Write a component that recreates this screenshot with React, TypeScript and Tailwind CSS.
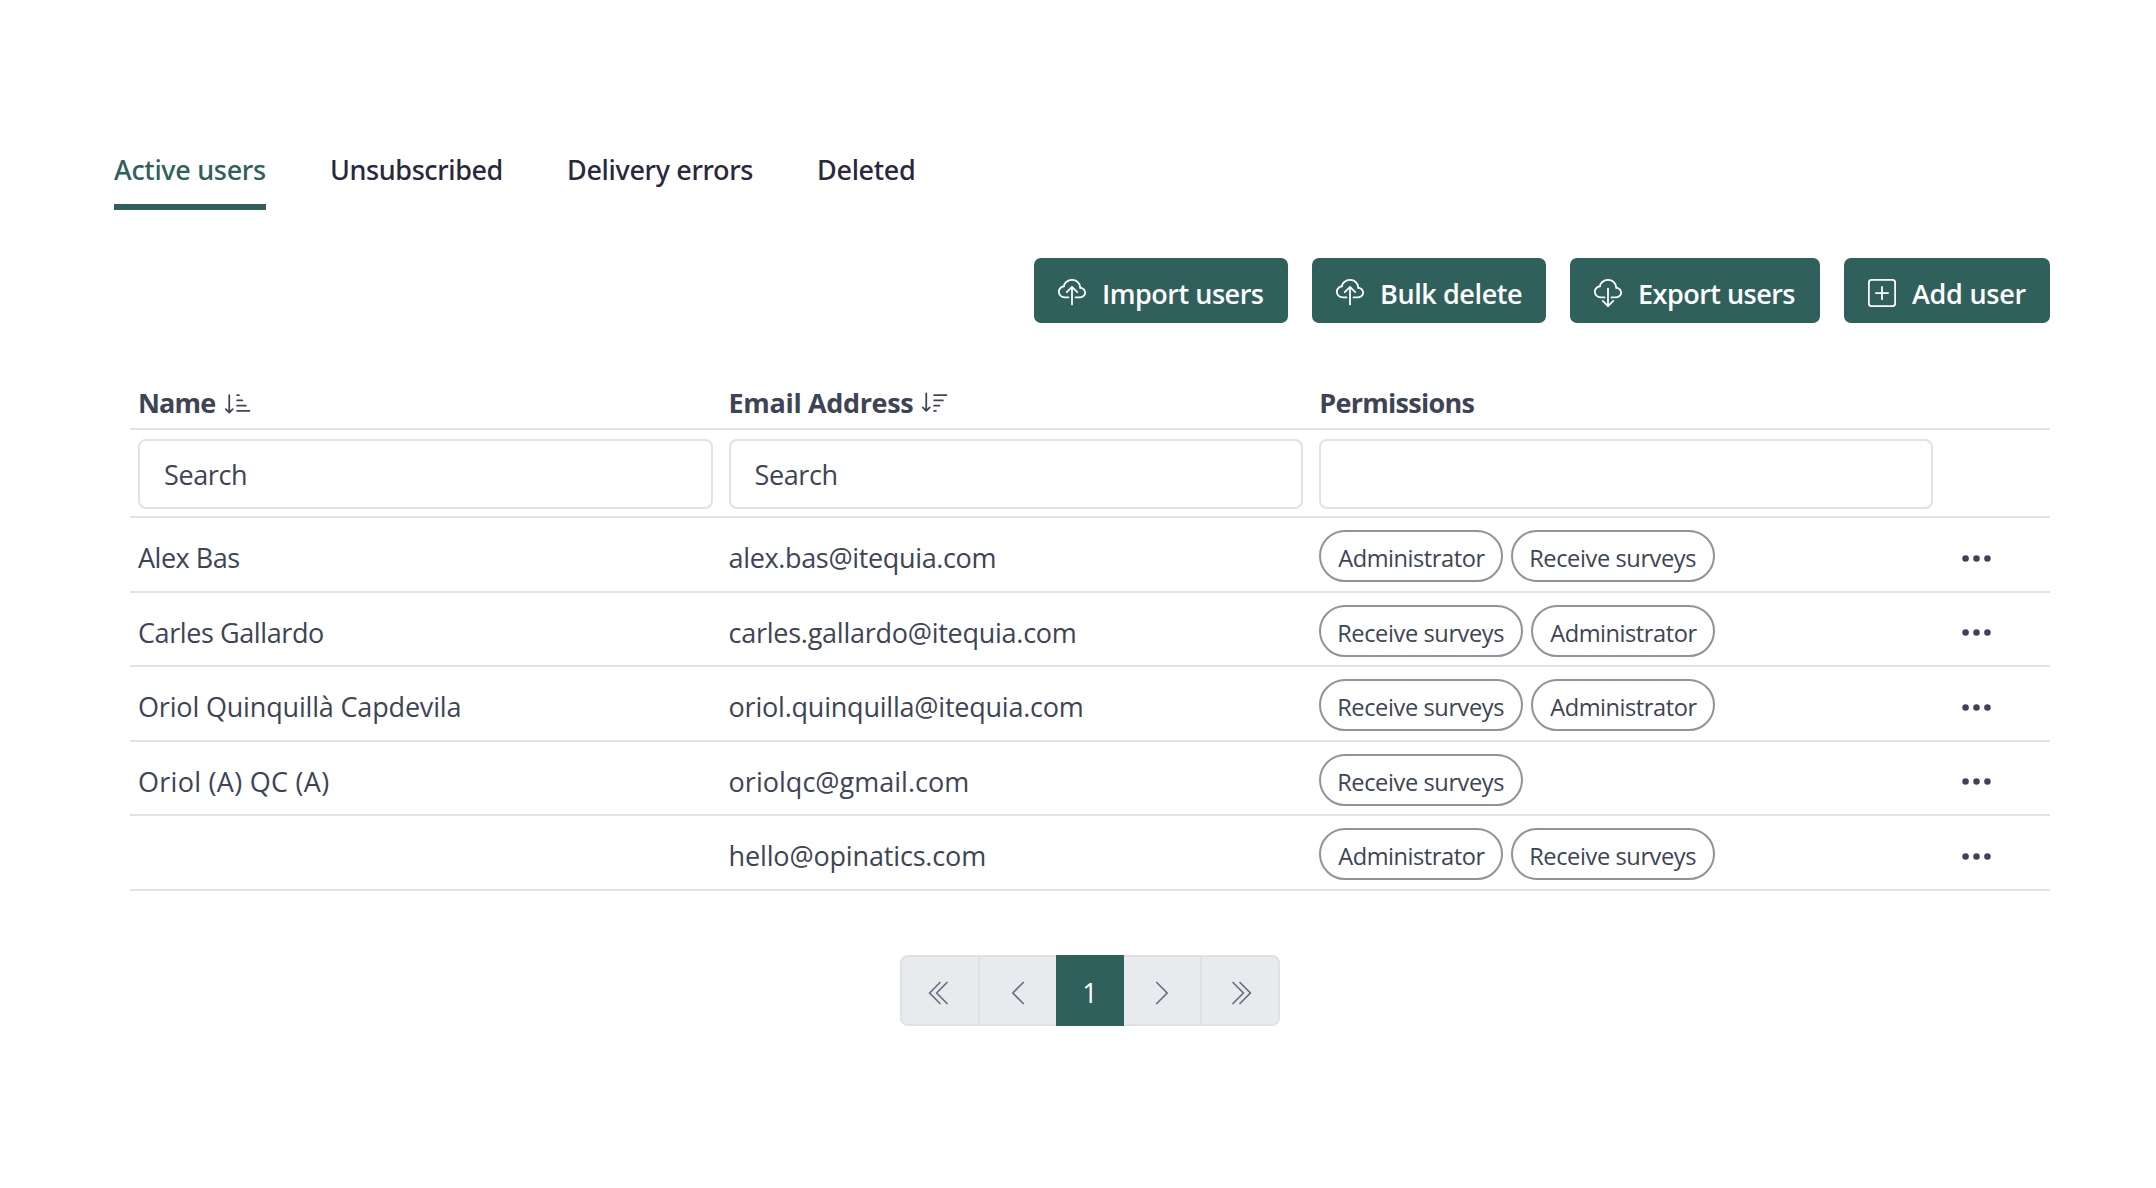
import clsx from 'clsx';
import type { IconType } from 'react-icons';
import {
  BsChevronDoubleLeft,
  BsChevronDoubleRight,
  BsChevronLeft,
  BsChevronRight,
  BsCloudDownload,
  BsCloudUpload,
  BsPlusSquare,
  BsSortDown,
  BsSortDownAlt,
  BsThreeDots,
} from 'react-icons/bs';

const tabs = [
  { label: 'Active users', className: 'w-[152px] tracking-[-0.3px]' },
  { label: 'Unsubscribed', className: 'w-[173px] tracking-[-0.4px]' },
  { label: 'Delivery errors', className: 'w-[186px] tracking-[-0.33px]' },
  { label: 'Deleted', className: 'w-[100px] tracking-[-0.3px]' },
];

const actions: { label: string; icon: IconType; className: string }[] = [
  { label: 'Import users', icon: BsCloudUpload, className: 'w-[254px] tracking-[-0.48px]' },
  { label: 'Bulk delete', icon: BsCloudUpload, className: 'w-[234px] tracking-[-0.4px]' },
  { label: 'Export users', icon: BsCloudDownload, className: 'w-[250px] tracking-[-0.52px]' },
  { label: 'Add user', icon: BsPlusSquare, className: 'w-[206px] tracking-[-0.27px]' },
];

const ADMIN = 'Administrator';
const SURVEYS = 'Receive surveys';

const users = [
  {
    name: 'Alex Bas',
    nameClass: 'tracking-[-0.5px]',
    email: 'alex.bas@itequia.com',
    emailClass: 'tracking-[-0.35px]',
    permissions: [ADMIN, SURVEYS],
  },
  {
    name: 'Carles Gallardo',
    nameClass: 'tracking-[-0.41px]',
    email: 'carles.gallardo@itequia.com',
    emailClass: 'tracking-[-0.26px]',
    permissions: [SURVEYS, ADMIN],
  },
  {
    name: 'Oriol Quinquillà Capdevila',
    nameClass: 'tracking-[-0.17px]',
    email: 'oriol.quinquilla@itequia.com',
    emailClass: 'tracking-[-0.22px]',
    permissions: [SURVEYS, ADMIN],
  },
  {
    name: 'Oriol (A) QC (A)',
    nameClass: 'tracking-[0.28px]',
    email: 'oriolqc@gmail.com',
    emailClass: 'tracking-[0.02px]',
    permissions: [SURVEYS],
  },
  {
    name: '',
    nameClass: '',
    email: 'hello@opinatics.com',
    emailClass: 'tracking-[-0.16px]',
    permissions: [ADMIN, SURVEYS],
  },
];

const rowGrid = 'grid grid-cols-[590.6px_590.6px_629.8px_109px] border-b-2 border-[#dfe2e7]';

function PermissionChip({ label }: { label: string }) {
  return (
    <span
      className={clsx(
        'flex h-[52px] items-center rounded-full border-2 border-[#93919c] pt-[6px] text-[23.6px] leading-none',
        label === ADMIN ? 'w-[184px] pl-[17px] tracking-[-0.45px]' : 'w-[204px] pl-4 tracking-[-0.4px]',
      )}
    >
      {label}
    </span>
  );
}

function SearchInput({ className }: { className: string }) {
  return (
    <input
      placeholder="Search"
      className={clsx(
        'h-[70px] rounded-[8px] border-2 border-[#dfe2e7] px-6 pt-px text-[27px] tracking-[-0.4px] placeholder:text-[#3d4455]',
        className,
      )}
    />
  );
}

function UsersTable() {
  return (
    <div className="mt-[59px]">
      <div className={clsx(rowGrid, 'h-12 pt-px leading-10 font-bold')}>
        <div className="flex px-2">
          <span className="w-[86px] tracking-[-0.86px]">Name</span>
          <BsSortDownAlt className="mt-[6px] size-7" />
        </div>
        <div className="flex px-2">
          <span className="w-[192px] tracking-[-0.35px]">Email Address</span>
          <BsSortDown className="mt-[6px] size-7" />
        </div>
        <div className="px-2 tracking-[-0.71px]">Permissions</div>
      </div>

      <div className={clsx(rowGrid, 'h-[88px] pt-[9px]')}>
        <SearchInput className="mx-2" />
        <SearchInput className="mx-2" />
        <div className="mx-2 h-[70px] rounded-[8px] border-2 border-[#dfe2e7]" />
      </div>

      {users.map((user) => (
        <div key={user.email} className={clsx(rowGrid, 'h-[74.5px]')}>
          <div className={clsx('px-2 pt-5 leading-10 whitespace-nowrap', user.nameClass)}>{user.name}</div>
          <div className={clsx('px-2 pt-5 leading-10 whitespace-nowrap', user.emailClass)}>{user.email}</div>
          <div className="flex gap-2 px-2 pt-3">
            {user.permissions.map((permission) => (
              <PermissionChip key={permission} label={permission} />
            ))}
          </div>
          <div className="pt-[22.5px] pl-[18px]">
            <BsThreeDots className="size-[35px]" />
          </div>
        </div>
      ))}
    </div>
  );
}

function Pagination() {
  const cell = 'flex items-center justify-center border-y-2 border-[#dee2e6] bg-[#e7ebee] text-[#6b7183]';
  return (
    <nav className="mx-auto mt-[64.5px] flex h-[71px] w-[380px]">
      <button className={clsx(cell, 'w-20 rounded-l-[8px] border-x-2 pt-1')}>
        <BsChevronDoubleLeft className="size-7" />
      </button>
      <button className={clsx(cell, 'w-[76px] pt-1')}>
        <BsChevronLeft className="size-7" />
      </button>
      <button className="w-[68px] bg-[#2f605c] pt-1.5 text-[27px] text-white">1</button>
      <button className={clsx(cell, 'w-[76px] pt-1')}>
        <BsChevronRight className="size-7" />
      </button>
      <button className={clsx(cell, 'w-20 rounded-r-[8px] border-x-2 pt-1')}>
        <BsChevronDoubleRight className="size-7" />
      </button>
    </nav>
  );
}

export default function App() {
  return (
    <main className="min-h-screen bg-white pt-[150px] pr-[106px] pl-[114px] font-['Open_Sans',sans-serif] text-[27px] text-[#3d4455]">
      <div className="flex gap-16 font-['Noto_Sans',sans-serif] leading-10 font-medium text-[#29283d]">
        {tabs.map((tab, i) => (
          <button
            key={tab.label}
            className={clsx(
              'h-[60px] border-b-6 pb-[14px] text-left whitespace-nowrap',
              i === 0 ? 'border-[#2f605c] text-[#2f605c]' : 'border-transparent',
              tab.className,
            )}
          >
            {tab.label}
          </button>
        ))}
      </div>

      <div className="mt-12 flex justify-end gap-6">
        {actions.map(({ label, icon: Icon, className }) => (
          <button
            key={label}
            className={clsx(
              'flex h-[65px] items-center gap-4 rounded-[7px] bg-[#2f605c] pt-[5px] pl-6 font-semibold whitespace-nowrap text-white',
              className,
            )}
          >
            <Icon className="size-7 shrink-0" />
            <span className="pt-0.5">{label}</span>
          </button>
        ))}
      </div>

      <div className="pl-4">
        <UsersTable />
        <Pagination />
      </div>
    </main>
  );
}
